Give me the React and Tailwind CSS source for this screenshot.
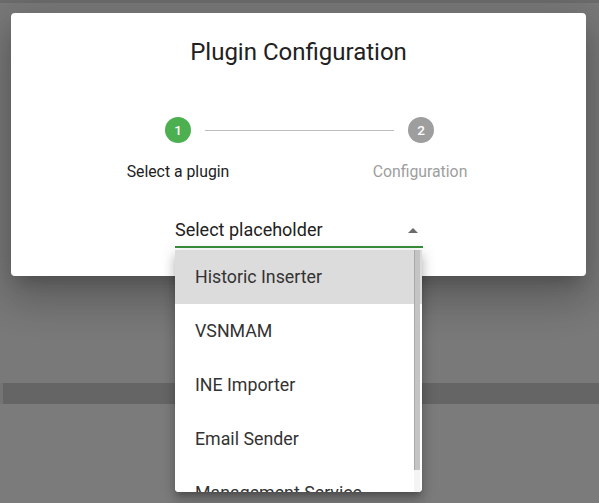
import React from 'react';

const plugins = ['Historic Inserter', 'VSNMAM', 'INE Importer', 'Email Sender', 'Management Service'];

export default function App() {
    const [selected] = React.useState(0);

    return (
        <div className="relative w-[599px] h-[503px] overflow-hidden bg-[#7b7b7b] font-['Roboto',sans-serif]">
            {/* page behind the overlay */}
            <div className="flex flex-col">
                <div className="h-[3px] bg-[#6c6c6c]" />
                <div className="h-[380px] bg-[#797979]" />
                <div className="h-[21px] bg-[#656565] border-l-[3px] border-[#747474]" />
            </div>

            {/* dialog */}
            <div className="absolute left-[11px] top-[13px] w-[575px] h-[263px] bg-white rounded shadow-[0_11px_15px_-7px_rgba(0,0,0,0.2),0_24px_38px_3px_rgba(0,0,0,0.14),0_9px_46px_8px_rgba(0,0,0,0.12)]">
                <h2 className="pt-[24px] text-center text-[24px] leading-[30px] text-[#212121]">Plugin Configuration</h2>

                <div className="mt-[50px] ml-[154px] flex items-center">
                    <div className="w-[26px] h-[26px] rounded-full bg-[#4caf50] text-white text-[13.5px] font-medium flex items-center justify-center">1</div>
                    <div className="mx-[14px] w-[189px] h-px bg-[#bdbdbd]" />
                    <div className="w-[26px] h-[26px] rounded-full bg-[#9e9e9e] text-white text-[13.5px] font-medium flex items-center justify-center">2</div>
                </div>

                <div className="mt-[19px] flex text-[15.8px] leading-[20px]">
                    <div className="ml-[77px] w-[180px] text-center text-[#212121]">Select a plugin</div>
                    <div className="ml-[62px] w-[180px] text-center text-[#9e9e9e]">Configuration</div>
                </div>

                <div className="mt-[36px] ml-[164px] w-[248px] border-b-2 border-[#388e3c] pb-[4px] flex items-center justify-between">
                    <span className="text-[18px] leading-[24px] text-[#212121]">Select placeholder</span>
                    <span className="mr-[5px] w-0 h-0 border-x-[5px] border-x-transparent border-b-[5px] border-b-[#6b6b6b]" />
                </div>
            </div>

            {/* dropdown menu */}
            <div className="absolute left-[175px] top-[250px] w-[247px] h-[242px] bg-white rounded-b shadow-[0_5px_5px_-3px_rgba(0,0,0,0.2),0_8px_10px_1px_rgba(0,0,0,0.14),0_3px_14px_2px_rgba(0,0,0,0.12)] overflow-hidden">
                <ul>
                    {plugins.map((p, i) => (
                        <li
                            key={p}
                            className={`h-[54px] pl-[20px] flex items-center text-[17.8px] text-[#333333] ${i === selected ? 'bg-[#dcdcdc]' : 'bg-white'}`}
                        >
                            {p}
                        </li>
                    ))}
                </ul>
                <div className="absolute right-[2px] top-0 w-[6px] h-[242px] bg-[#f4f4f4]">
                    <div className="w-[6px] h-[220px] bg-[#c4c4c4] border-l border-[#a9a9a9]" />
                </div>
            </div>
        </div>
    );
}
